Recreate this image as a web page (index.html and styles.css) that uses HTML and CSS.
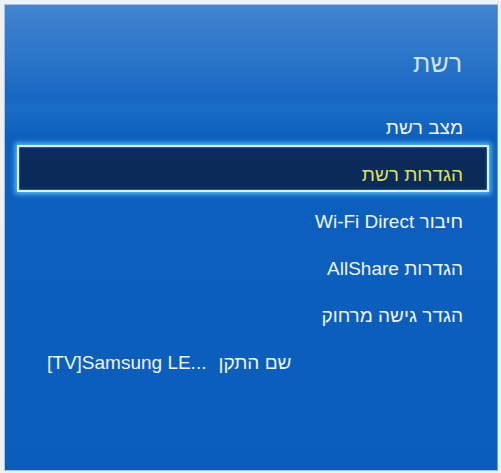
FILE: index.html
```html
<!DOCTYPE html>
<html lang="he" dir="rtl">
<head>
<meta charset="utf-8">
<title>רשת</title>
<link rel="stylesheet" href="styles.css">
</head>
<body>
<div class="panel">
  <div class="header"><h1 class="title">רשת</h1></div>
  <ul class="menu">
    <li class="item">מצב רשת</li>
    <li class="item selected">הגדרות רשת</li>
    <li class="item">חיבור Wi-Fi Direct</li>
    <li class="item">הגדרות AllShare</li>
    <li class="item">הגדר גישה מרחוק</li>
    <li class="item device"><span class="label">שם התקן</span><span class="value" dir="ltr">[TV]Samsung LE...</span></li>
  </ul>
</div>
</body>
</html>
```
FILE: styles.css
```css
html, body {
  margin: 0;
  padding: 0;
}
body {
  background: #eef1f4;
  width: 501px;
  height: 473px;
  overflow: hidden;
  font-family: "Liberation Sans", Arial, sans-serif;
}
.panel {
  box-sizing: border-box;
  margin: 4px 3px 0 4px;
  width: 494px;
  height: 467px;
  border: 1px solid #a9c4e2;
  border-right-color: #6f9ccc;
  background: linear-gradient(to bottom, #4284d0 0%, #2a74c8 12%, #1766c2 20%, #1a6cc6 22%, #0d60bd 28%, #0a5dba 100%);
  display: flex;
  flex-direction: column;
}
.header {
  height: 99px;
  display: flex;
  align-items: center;
  padding-right: 35px;
}
.title {
  margin: 0;
  margin-top: 18px;
  font-size: 25px;
  font-weight: normal;
  color: #cfe6f8;
}
.menu {
  list-style: none;
  margin: 0;
  padding: 0;
}
.item {
  height: 47px;
  display: flex;
  align-items: center;
  padding-right: 34px;
  font-size: 19px;
  color: #f2f6fb;
}
.item.selected {
  box-sizing: border-box;
  height: 47px;
  margin: -6px 8px 6px 12px;
  padding-top: 13px;
  padding-right: 24px;
  border: 2px solid #dcf2ff;
  background: linear-gradient(to bottom, #0b2b5e, #0a2a57);
  box-shadow: 0 0 5px 2px #58c0ff, inset 0 0 2px #6fb8ee;
  color: #dfe256;
}
.item.device {
  justify-content: flex-end;
  padding-right: 0;
  padding-left: 42px;
  gap: 12px;
}
```
